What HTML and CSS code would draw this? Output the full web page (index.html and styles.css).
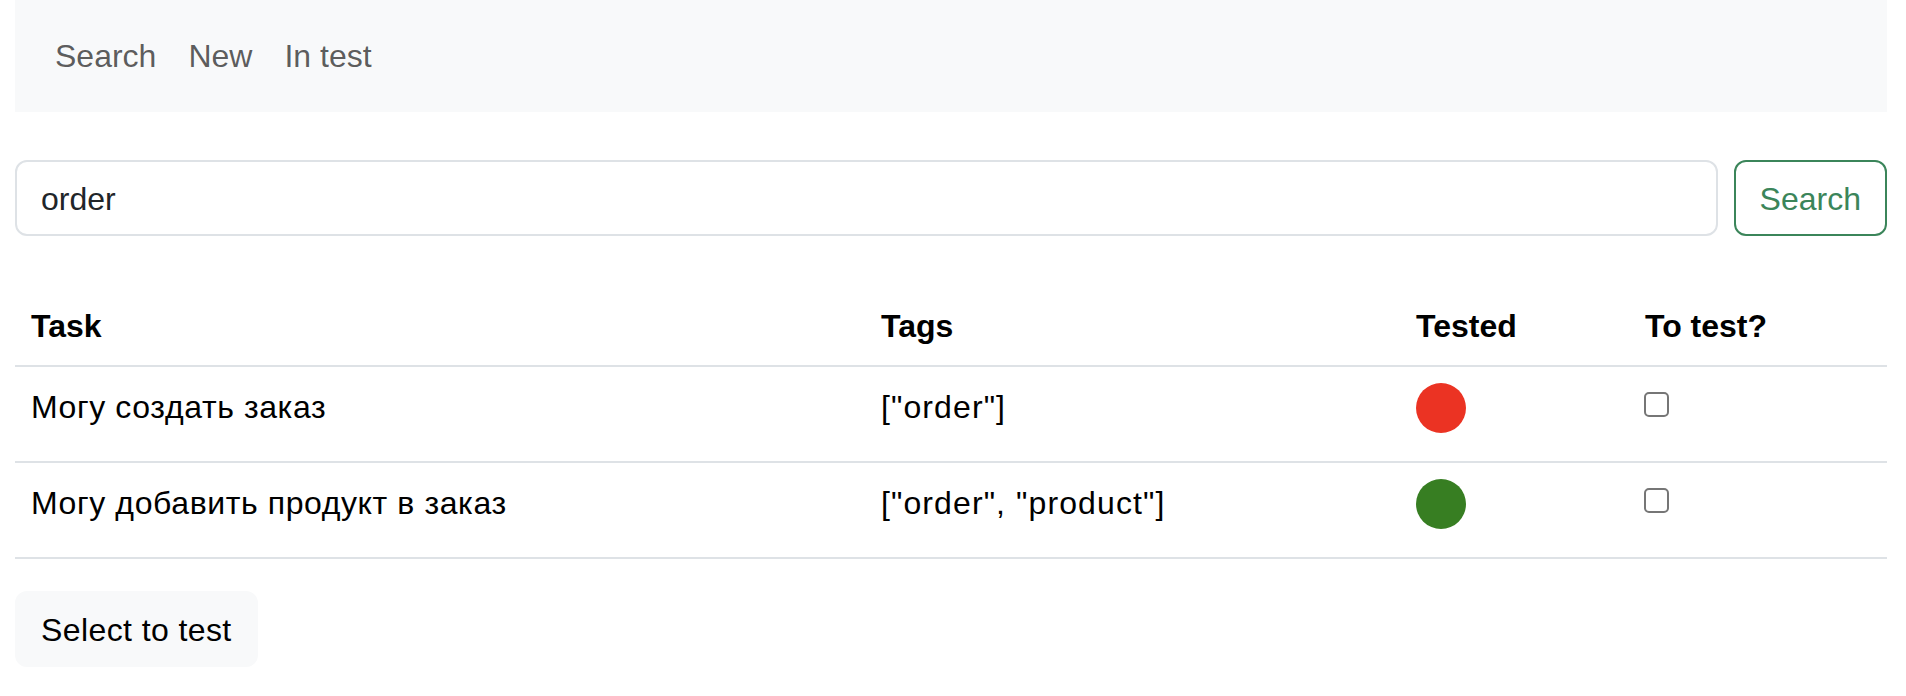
FILE: index.html
```html
<!DOCTYPE html>
<html lang="ru">
<head>
<meta charset="utf-8">
<title>Tasks</title>
<link rel="stylesheet" href="styles.css">
</head>
<body>
<nav class="navbar">
  <a class="nav-link" href="#">Search</a>
  <a class="nav-link" href="#">New</a>
  <a class="nav-link" href="#">In test</a>
</nav>
<form class="search-form">
  <input class="search-input" type="text" value="order">
  <button class="btn btn-outline" type="button">Search</button>
</form>
<table class="tasks">
  <colgroup>
    <col class="col-task">
    <col class="col-tags">
    <col class="col-tested">
    <col class="col-totest">
  </colgroup>
  <thead>
    <tr><th>Task</th><th>Tags</th><th>Tested</th><th>To test?</th></tr>
  </thead>
  <tbody>
    <tr>
      <td class="task">Могу создать заказ</td>
      <td class="tags">["order"]</td>
      <td><span class="dot dot-red"></span></td>
      <td><input class="check" type="checkbox"></td>
    </tr>
    <tr>
      <td class="task">Могу добавить продукт в заказ</td>
      <td class="tags">["order", "product"]</td>
      <td><span class="dot dot-green"></span></td>
      <td><input class="check" type="checkbox"></td>
    </tr>
  </tbody>
</table>
<button class="btn btn-light" type="button">Select to test</button>
</body>
</html>
```
FILE: styles.css
```css
* { box-sizing: border-box; }
html, body { margin: 0; }
body {
  padding: 0 19px 0 15px;
  font-family: "Liberation Sans", Arial, Helvetica, sans-serif;
  font-size: 32px;
  line-height: 1.5;
  color: #212529;
  background: #fff;
}
.navbar {
  height: 112px;
  background: #f8f9fa;
  display: flex;
  align-items: center;
  padding: 0 24px;
}
.nav-link {
  padding: 0 16px;
  color: rgba(0, 0, 0, 0.65);
  text-decoration: none;
}
.search-form {
  margin-top: 48px;
  display: flex;
  gap: 16px;
}
.search-input {
  flex: 1;
  height: 76px;
  border: 2px solid #dee2e6;
  border-radius: 12px;
  padding: 2px 24px 0;
  font: inherit;
  color: #212529;
  outline: none;
}
.btn {
  height: 76px;
  padding: 2px 24px 0;
  border-radius: 12px;
  font: inherit;
  cursor: pointer;
}
.btn-outline {
  background: #fff;
  border: 2px solid #3b855a;
  color: #3b855a;
}
.btn-light {
  background: #f8f9fa;
  border: 2px solid #f8f9fa;
  color: #000;
  margin-top: 32px;
  display: block;
  letter-spacing: 0.4px;
}
.tasks {
  margin-top: 49px;
  width: 100%;
  border-collapse: collapse;
  table-layout: fixed;
}
.col-task { width: 850px; }
.col-tags { width: 535px; }
.col-tested { width: 229px; }
.col-totest { width: 258px; }
.tasks th, .tasks td {
  padding: 16px;
  text-align: left;
  vertical-align: top;
  border-bottom: 2px solid #dee2e6;
}
.tasks th { font-weight: bold; color: #000; padding-top: 17px; padding-bottom: 15px; }
.tasks td { color: #000; }
.tasks .task { letter-spacing: 0.6px; }
.tasks .tags { letter-spacing: 1.1px; }
.dot {
  display: block;
  width: 50px;
  height: 50px;
  border-radius: 50%;
  margin-bottom: 12px;
}
.dot-red { background: #eb3323; }
.dot-green { background: #377e22; }
.check {
  appearance: none;
  -webkit-appearance: none;
  display: block;
  width: 25px;
  height: 25px;
  margin: 9px 0 0 -1px;
  border: 2px solid #767676;
  border-radius: 5px;
  background: #fff;
}
```
